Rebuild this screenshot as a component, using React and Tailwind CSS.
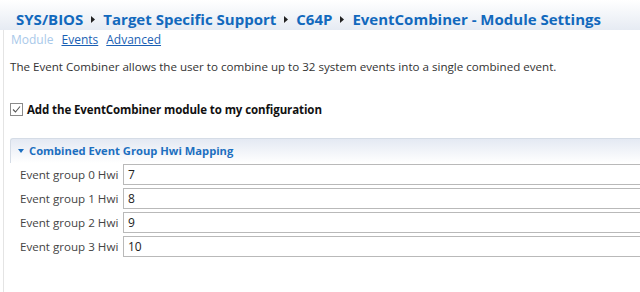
import React from 'react';

const groups = [
  { label: 'Event group 0 Hwi', value: '7' },
  { label: 'Event group 1 Hwi', value: '8' },
  { label: 'Event group 2 Hwi', value: '9' },
  { label: 'Event group 3 Hwi', value: '10' },
];

function Crumb() {
  return (
    <svg width="4" height="7" viewBox="0 0 4 7" className="inline-block mx-[8px] relative top-[-1px]">
      <path d="M0 0 L4 3.5 L0 7 Z" fill="#222" />
    </svg>
  );
}

export default function App() {
  return (
    <div className="w-[640px] h-[292px] bg-white overflow-hidden font-['Open_Sans','Noto_Sans',sans-serif] text-[#333]">
      {/* Title bar */}
      <div className="h-[30px] pl-[16px] pt-[7px] bg-gradient-to-b from-white to-[#e6ebf3] whitespace-nowrap">
        <span className="text-[15px] font-bold text-[#1269bd] leading-[20px]">
          SYS/BIOS<Crumb />Target Specific Support<Crumb />C64P<Crumb />EventCombiner - Module Settings
        </span>
      </div>

      <div className="ml-[3px] h-[262px] border-l border-[#e4e4e4] pl-[6px]">
        {/* Tabs */}
        <div className="flex gap-[8px] pt-[1px] pl-[1px] text-[12px] leading-[18px]">
          <span className="text-[#a9c9ea]">Module</span>
          <span className="text-[#1a5fb4] underline">Events</span>
          <span className="text-[#1a5fb4] underline">Advanced</span>
        </div>

        <p className="mt-[10px] text-[11.6px] leading-[16px] text-[#333] whitespace-nowrap">
          The Event Combiner allows the user to combine up to 32 system events into a single combined event.
        </p>

        <label className="mt-[26px] flex items-center gap-[4px]">
          <span className="w-[13px] h-[13px] border border-[#8a8a8a] bg-white flex items-center justify-center">
            <svg width="11" height="11" viewBox="0 0 11 11">
              <path d="M2 5.5 L4.5 8 L9 2.5" fill="none" stroke="#555" strokeWidth="1.1" />
            </svg>
          </span>
          <span className="text-[11.5px] font-bold text-[#111] tracking-[-0.1px]">Add the EventCombiner module to my configuration</span>
        </label>

        {/* Section */}
        <div className="mt-[20px]">
          <div className="h-[25px] flex items-center gap-[5px] pl-[7px] border-t border-l border-[#d5dce6] rounded-tl-[3px] bg-gradient-to-b from-[#e4e9f3] to-white">
            <svg width="6" height="4" viewBox="0 0 6 4">
              <path d="M0 0 L6 0 L3 4 Z" fill="#1c6fc0" />
            </svg>
            <span className="text-[11.2px] font-bold text-[#1c6fc0]">Combined Event Group Hwi Mapping</span>
          </div>
          <div className="flex flex-col gap-[3px] mt-[1px]">
            {groups.map((g) => (
              <div key={g.label} className="flex items-center">
                <span className="w-[113px] shrink-0 pl-[10px] text-[11.6px] text-[#444] whitespace-nowrap">{g.label}</span>
                <div className="w-[560px] shrink-0 h-[21px] border border-[#b9b9b9] bg-white pl-[4px] text-[12px] leading-[19px] text-[#222]">
                  {g.value}
                </div>
              </div>
            ))}
          </div>
        </div>
      </div>
    </div>
  );
}
